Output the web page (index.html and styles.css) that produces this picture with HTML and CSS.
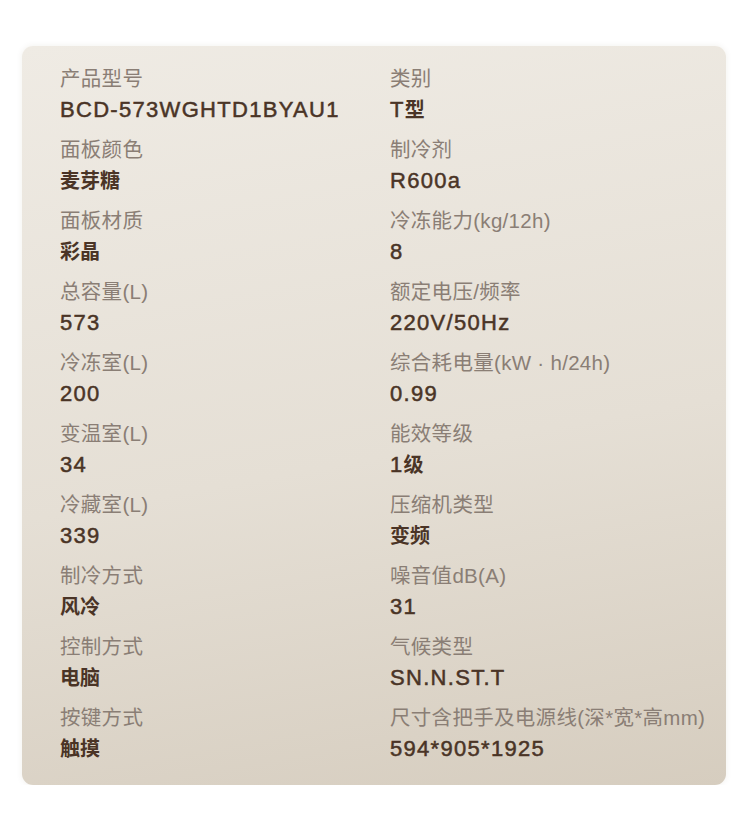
FILE: index.html
```html
<!DOCTYPE html>
<html lang="zh">
<head>
<meta charset="utf-8">
<link rel="stylesheet" href="styles.css">
</head>
<body>
<div class="card">
  <div class="item"><div class="label">产品型号</div><div class="value">BCD-573WGHTD1BYAU1</div></div>
  <div class="item"><div class="label">类别</div><div class="value">T<span class="cn">型</span></div></div>
  <div class="item"><div class="label">面板颜色</div><div class="value cn">麦芽糖</div></div>
  <div class="item"><div class="label">制冷剂</div><div class="value">R600a</div></div>
  <div class="item"><div class="label">面板材质</div><div class="value cn">彩晶</div></div>
  <div class="item"><div class="label">冷冻能力(kg/12h)</div><div class="value">8</div></div>
  <div class="item"><div class="label">总容量(L)</div><div class="value">573</div></div>
  <div class="item"><div class="label">额定电压/频率</div><div class="value">220V/50Hz</div></div>
  <div class="item"><div class="label">冷冻室(L)</div><div class="value">200</div></div>
  <div class="item"><div class="label">综合耗电量(kW · h/24h)</div><div class="value">0.99</div></div>
  <div class="item"><div class="label">变温室(L)</div><div class="value">34</div></div>
  <div class="item"><div class="label">能效等级</div><div class="value">1<span class="cn">级</span></div></div>
  <div class="item"><div class="label">冷藏室(L)</div><div class="value">339</div></div>
  <div class="item"><div class="label">压缩机类型</div><div class="value cn">变频</div></div>
  <div class="item"><div class="label">制冷方式</div><div class="value cn">风冷</div></div>
  <div class="item"><div class="label">噪音值dB(A)</div><div class="value">31</div></div>
  <div class="item"><div class="label">控制方式</div><div class="value cn">电脑</div></div>
  <div class="item"><div class="label">气候类型</div><div class="value">SN.N.ST.T</div></div>
  <div class="item"><div class="label">按键方式</div><div class="value cn">触摸</div></div>
  <div class="item"><div class="label">尺寸含把手及电源线(深*宽*高mm)</div><div class="value">594*905*1925</div></div>
</div>
</body>
</html>
```

FILE: styles.css
```css
html, body {
  margin: 0;
  padding: 0;
  background: #ffffff;
}
body {
  padding: 46px 0 0 22px;
  font-family: "Liberation Sans", "Noto Sans CJK SC", sans-serif;
}
.card {
  width: 704px;
  height: 739px;
  box-sizing: border-box;
  border-radius: 11px;
  background: linear-gradient(170deg, #efebe4 0%, #e5dfd5 55%, #d6cdbf 100%);
  box-shadow: 0 0 6px rgba(80, 60, 30, 0.08);
  padding: 18px 0 22px 38px;
  display: grid;
  grid-template-columns: 330px 1fr;
  row-gap: 11px;
}
.item {
  display: flex;
  flex-direction: column;
}
.label {
  font-size: 20.5px;
  line-height: 30px;
  letter-spacing: 0.3px;
  color: #8a7e75;
  white-space: nowrap;
}
.value {
  font-size: 22px;
  line-height: 30px;
  padding-top: 1px;
  height: 29px;
  letter-spacing: 1.3px;
  -webkit-text-stroke: 0.5px #4a3426;
  color: #4a3426;
  white-space: nowrap;
}
.cn {
  font-size: 20px;
  font-weight: bold;
  letter-spacing: 0;
  -webkit-text-stroke: 0;
}
```
